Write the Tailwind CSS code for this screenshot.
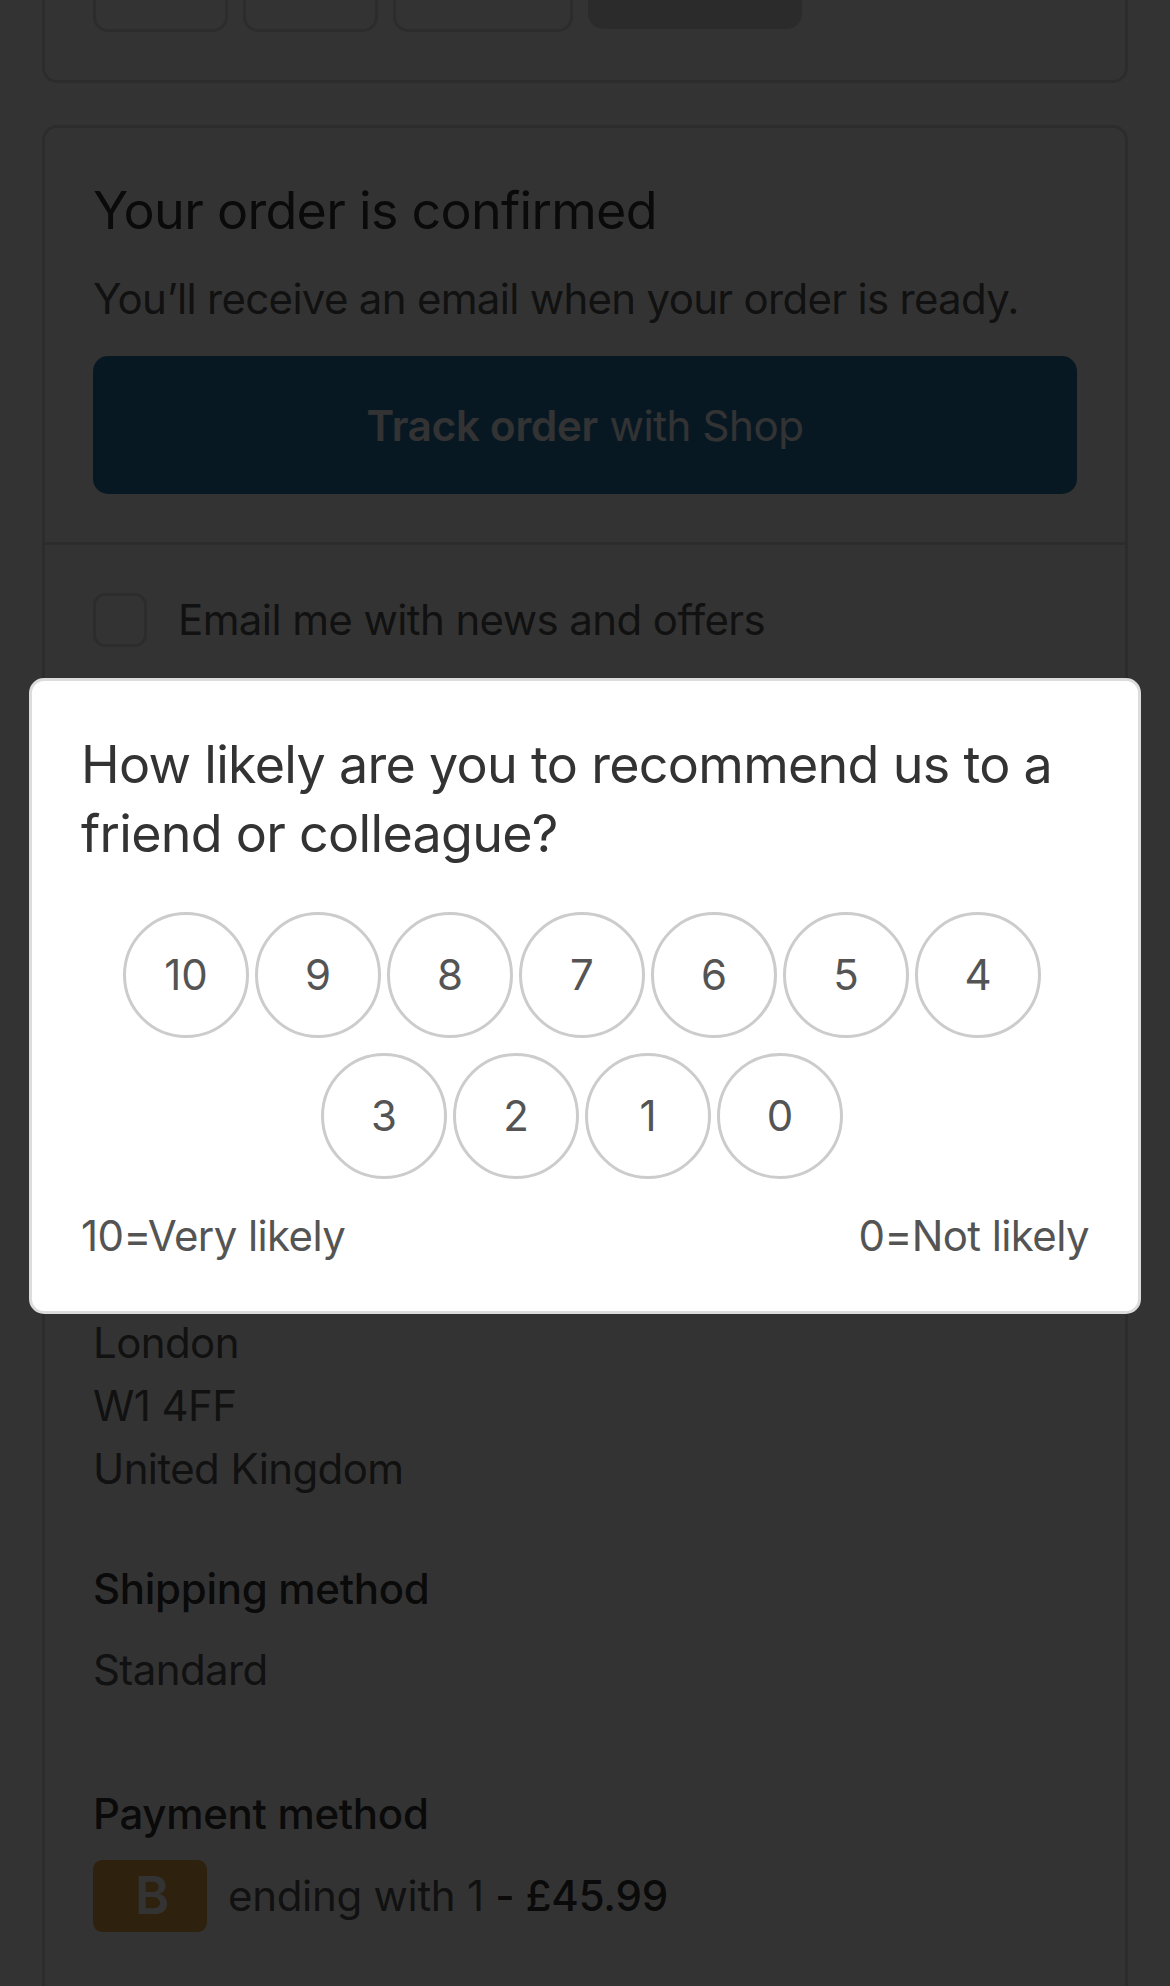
<!DOCTYPE html>
<html lang="en">
<head>
  <meta charset="UTF-8">
  <meta name="viewport" content="width=device-width, initial-scale=1.0">
  <title>Order status</title>
  <script src="https://cdn.jsdelivr.net/npm/@tailwindcss/browser@4"></script>
</head>
<body class="relative h-[1986px] overflow-hidden bg-white font-['Inter',sans-serif] text-[#545454]">
  <main class="h-[1986px] overflow-hidden px-[42px]">
    <!-- first card is scrolled off the top -->
    <section class="flex h-[83px] gap-[15px] rounded-b-[15px] border-x-[3px] border-b-[3px] border-[#d9d9d9] pl-[48px]">
      <div class="h-[32px] w-[135px] rounded-b-[15px] border-x-[3px] border-b-[3px] border-[#d9d9d9]"></div>
      <div class="h-[32px] w-[135px] rounded-b-[15px] border-x-[3px] border-b-[3px] border-[#d9d9d9]"></div>
      <div class="h-[32px] w-[180px] rounded-b-[15px] border-x-[3px] border-b-[3px] border-[#d9d9d9]"></div>
      <div class="h-[29px] w-[214px] rounded-b-[15px] bg-[#d7d7d7]"></div>
    </section>

    <section class="mt-[42px] h-[1900px] rounded-t-[15px] border-x-[3px] border-t-[3px] border-[#d9d9d9]">
      <div class="h-[417px] border-b-[3px] border-[#d9d9d9] px-[48px] pt-[51px]">
        <h2 class="text-[52px] leading-[64px] tracking-[-0.7px] text-[#333333]">Your order is confirmed</h2>
        <p class="mt-[32px] text-[42px] leading-[48px] tracking-[-0.7px]">You’ll receive an email when your order is ready.</p>
        <a class="mt-[33px] flex h-[138px] items-center justify-center rounded-[15px] bg-[#2c78b0] text-[42px] tracking-[-0.4px] text-white"><span><b class="font-semibold tracking-[-0.2px]">Track order</b> with Shop</span></a>
      </div>
      <label class="flex items-center gap-[31px] px-[48px] pt-[48px]">
        <span class="size-[54px] rounded-[12px] border-[3px] border-[#d9d9d9]"></span>
        <span class="text-[42px] leading-[54px] tracking-[-0.6px]">Email me with news and offers</span>
      </label>

      <!-- address, mostly behind the survey -->
      <div class="mt-[664px] px-[48px] text-[42px] leading-[63px] tracking-[-0.6px]">
        <p>London</p>
        <p>W1 4FF</p>
        <p>United Kingdom</p>
      </div>
      <h3 class="mt-[65px] px-[48px] text-[42px] leading-[48px] font-medium tracking-[-0.3px] text-[#333333]">Shipping method</h3>
      <p class="mt-[33px] px-[48px] text-[42px] leading-[48px] tracking-[-0.6px]">Standard</p>
      <h3 class="mt-[96px] px-[48px] text-[42px] leading-[48px] font-medium tracking-[-0.3px] text-[#333333]">Payment method</h3>
      <div class="mt-[22px] flex items-center gap-[21px] px-[48px] text-[42px] leading-[62px] tracking-[-0.3px]">
        <span class="flex h-[72px] w-[114px] items-center justify-center rounded-[9px] bg-[#e6aa46] pl-[4px] text-[52px] font-semibold text-white">B</span>
        <span>ending with 1 <span class="font-medium tracking-[-0.2px] text-[#333333]">- £45.99</span></span>
      </div>
    </section>
  </main>

  <!-- overlay and survey -->
  <div class="absolute inset-0 flex items-center justify-center bg-black/80 px-[29px] pt-[5px]">
    <div class="w-full rounded-[15px] border-[3px] border-[#dcdcdc] bg-white px-[49px] pt-[49px] pb-[50px]">
      <h2 class="text-[52px] leading-[69px] tracking-[-0.7px] text-[#333333]">How likely are you to recommend us to a friend or colleague?</h2>
      <div class="mt-[44px] flex flex-wrap justify-center text-[42px] text-[#545454]">
        <button class="mr-[6px] mb-[15px] size-[126px] rounded-full border-[3px] border-[#cccccc]">10</button>
        <button class="mr-[6px] mb-[15px] size-[126px] rounded-full border-[3px] border-[#cccccc]">9</button>
        <button class="mr-[6px] mb-[15px] size-[126px] rounded-full border-[3px] border-[#cccccc]">8</button>
        <button class="mr-[6px] mb-[15px] size-[126px] rounded-full border-[3px] border-[#cccccc]">7</button>
        <button class="mr-[6px] mb-[15px] size-[126px] rounded-full border-[3px] border-[#cccccc]">6</button>
        <button class="mr-[6px] mb-[15px] size-[126px] rounded-full border-[3px] border-[#cccccc]">5</button>
        <button class="mr-[6px] mb-[15px] size-[126px] rounded-full border-[3px] border-[#cccccc]">4</button>
        <button class="mr-[6px] mb-[15px] size-[126px] rounded-full border-[3px] border-[#cccccc]">3</button>
        <button class="mr-[6px] mb-[15px] size-[126px] rounded-full border-[3px] border-[#cccccc]">2</button>
        <button class="mr-[6px] mb-[15px] size-[126px] rounded-full border-[3px] border-[#cccccc]">1</button>
        <button class="mr-[6px] mb-[15px] size-[126px] rounded-full border-[3px] border-[#cccccc]">0</button>
      </div>
      <div class="mt-[17px] flex justify-between text-[42px] leading-[50px] tracking-[-0.6px] text-[#545454]">
        <span>10=Very likely</span>
        <span>0=Not likely</span>
      </div>
    </div>
  </div>
</body>
</html>
